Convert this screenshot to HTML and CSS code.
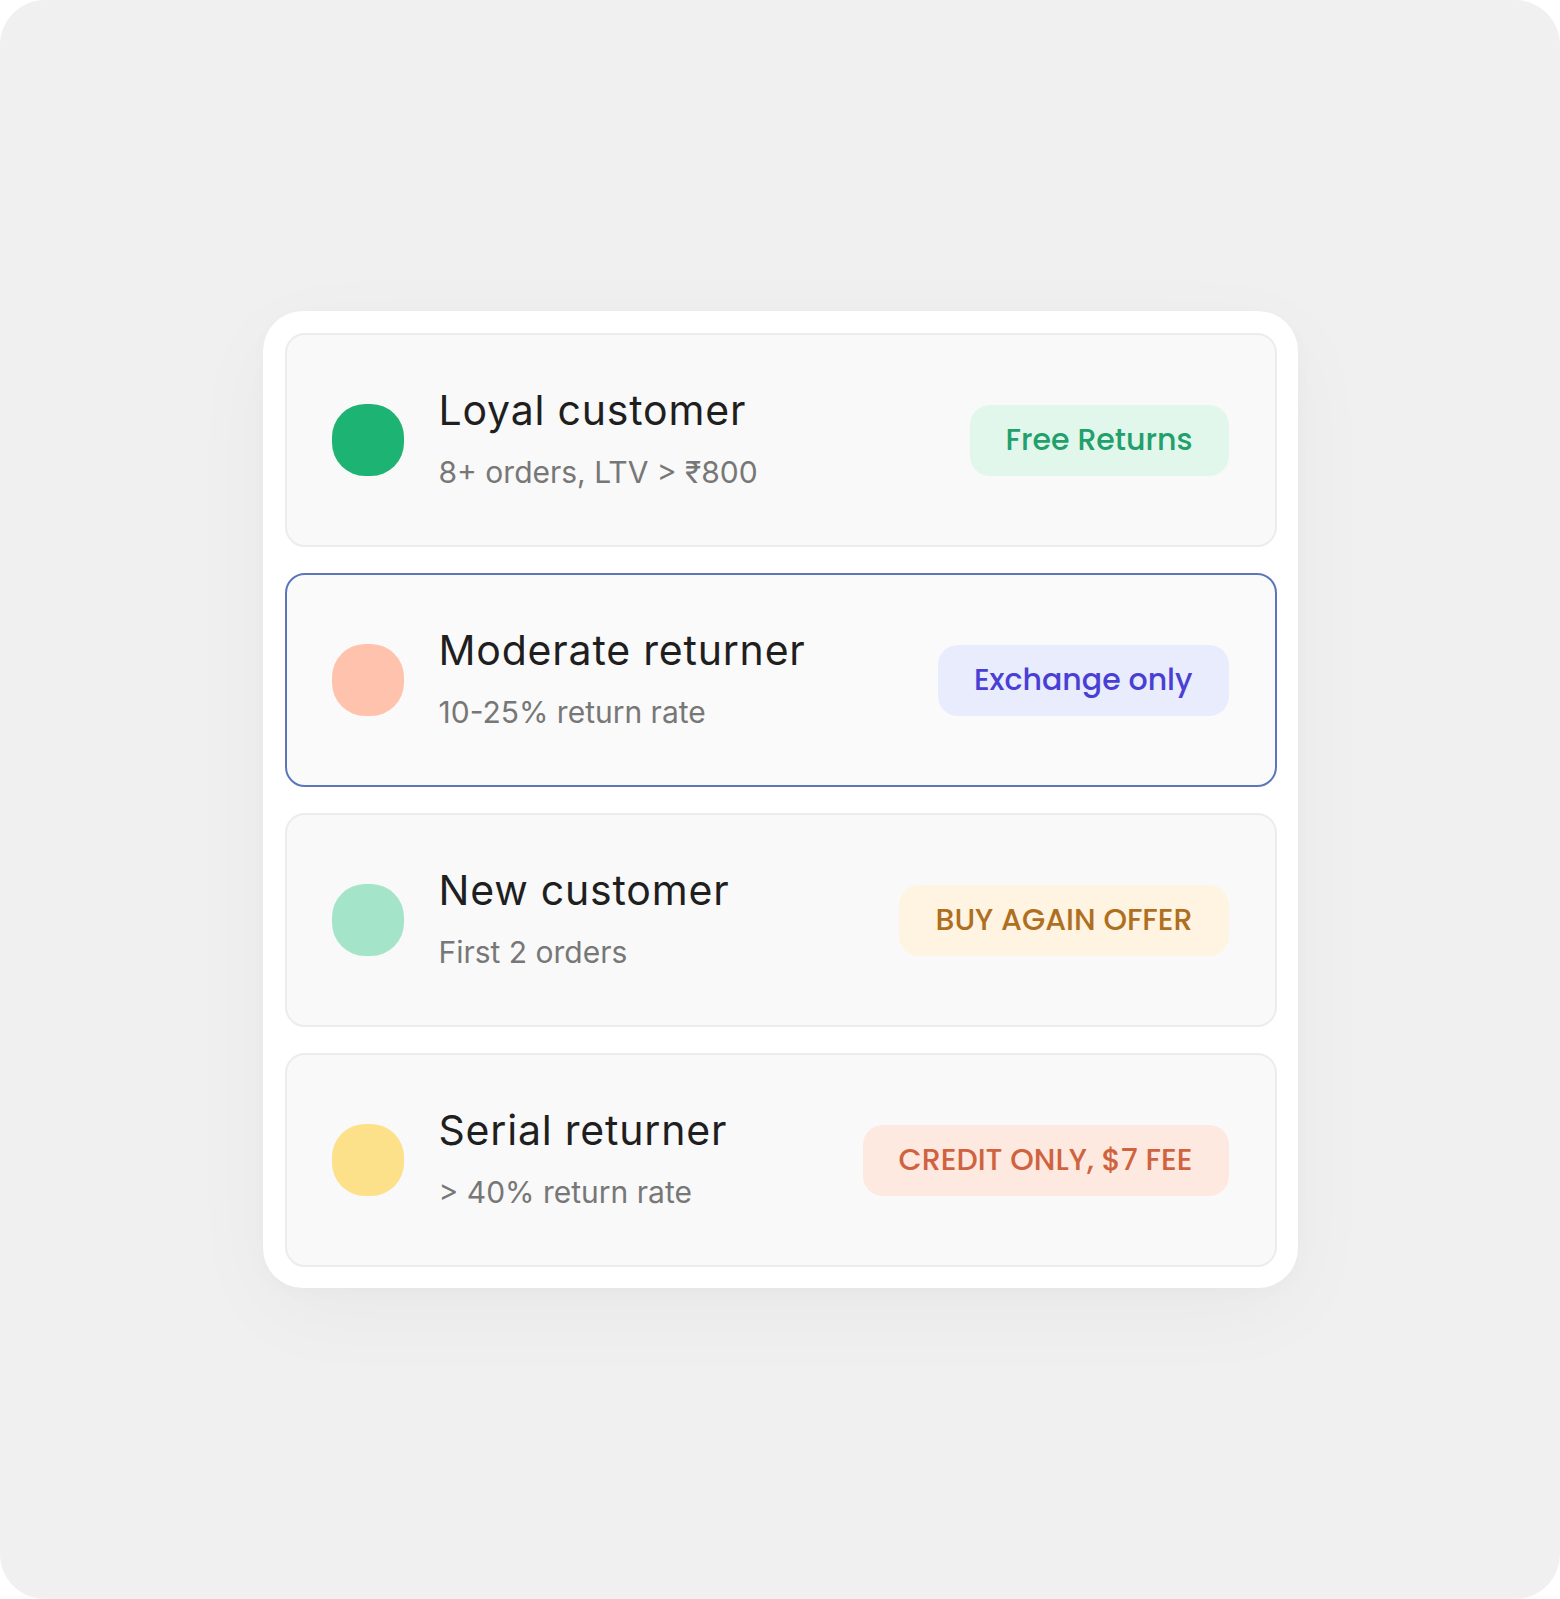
FILE: index.html
```html
<!DOCTYPE html>
<html lang="en">

<head>
  <meta charset="utf-8">
  <title>return segments</title>

  <link rel="stylesheet" href="styles.css">
</head>

<body>
  <div class="frame">

    <div class="segments">

      <div class="segment">
        <span class="dot dot-loyal"></span>
        <div class="info">
          <h3>Loyal customer</h3>
          <p>8+ orders, LTV &gt; ₹800</p>
        </div>
        <span class="badge badge-green">Free Returns</span>
      </div>

      <div class="segment selected">
        <span class="dot dot-moderate"></span>
        <div class="info">
          <h3>Moderate returner</h3>
          <p>10-25% return rate</p>
        </div>
        <span class="badge badge-indigo">Exchange only</span>
      </div>

      <div class="segment">
        <span class="dot dot-new"></span>
        <div class="info">
          <h3>New customer</h3>
          <p>First 2 orders</p>
        </div>
        <span class="badge badge-amber">BUY AGAIN OFFER</span>
      </div>

      <div class="segment">
        <span class="dot dot-serial"></span>
        <div class="info">
          <h3>Serial returner</h3>
          <p>&gt; 40% return rate</p>
        </div>
        <span class="badge badge-red">CREDIT ONLY, $7 FEE</span>
      </div>

    </div>

  </div>
</body>

</html>
```

FILE: styles.css
```css
body {
	margin: 0;
	background: #ffffff;
	font-family: "Inter", "Liberation Sans", sans-serif;
	font-optical-sizing: none;
}

.frame {
	width: 1560px;
	height: 1599px;
	background: #f0f0f0;
	border-radius: 45px;
	display: flex;
	align-items: center;
	justify-content: center;
}

.segments {
	width: 1035px;
	box-sizing: border-box;
	padding: 22px 21px 21px 22px;
	background: #ffffff;
	border-radius: 40px;
	box-shadow: 0 24px 90px rgba(0, 0, 0, 0.035), 0 4px 20px rgba(0, 0, 0, 0.02);
	display: flex;
	flex-direction: column;
	gap: 26px;
}

.segment {
	height: 214px;
	box-sizing: border-box;
	display: flex;
	align-items: center;
	padding: 0 46px 0 45px;
	background: #f9f9f9;
	border: 2px solid #ececec;
	border-radius: 20px;
}

.segment.selected {
	border-color: #5b77bb;
	background: #fafafa;
}

.dot {
	width: 72px;
	height: 72px;
	flex: none;
	border-radius: 46%;
	margin-right: 35px;
}

.dot-loyal { background: #1db373; }
.dot-moderate { background: #ffc2ad; }
.dot-new { background: #a4e5c9; }
.dot-serial { background: #fde08a; }

.info {
	flex: 1;
	display: flex;
	flex-direction: column;
	gap: 19px;
	padding-bottom: 4px;
}

.info h3 {
	margin: 0;
	font-size: 41px;
	line-height: 48px;
	font-weight: 400;
	letter-spacing: 0.8px;
	color: #1f1f1f;
}

.info p {
	margin: 0;
	font-size: 30px;
	line-height: 38px;
	color: #777777;
}

.badge {
	flex: none;
	height: 71px;
	box-sizing: border-box;
	display: flex;
	align-items: center;
	padding: 0 36px;
	border-radius: 20px;
	font-family: "Poppins", "Inter", sans-serif;
	font-size: 30px;
	font-weight: 500;
}

.badge-green { background: #e2f7ec; color: #22a06b; }
.badge-indigo { background: #e8ecfd; color: #4a3fd4; }
.badge-amber { background: #fff3e2; color: #ae6f1f; }
.badge-red { background: #fde9e0; color: #d0633f; }
```
